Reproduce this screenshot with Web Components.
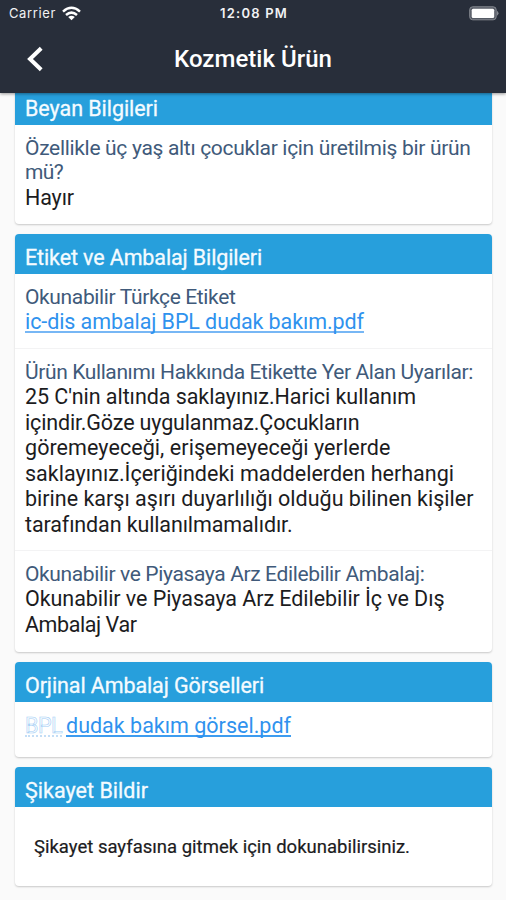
<!DOCTYPE html>
<html lang="tr">
<head>
<meta charset="utf-8">
<title>Kozmetik Ürün</title>
<style>
html, body {
    margin: 0;
    height: 900px;
    overflow: hidden;
    background: #fafafa;
    font-family: Roboto, "Liberation Sans", sans-serif;
}
</style>
</head>
<body>
<app-screen>
    <status-bar slot="top"></status-bar>
    <nav-bar slot="top"><text-line width="158">Kozmetik Ürün</text-line></nav-bar>

    <info-card style="--body-height: 99px">
        <text-line slot="title" width="133">Beyan Bilgileri</text-line>
        <info-row>
            <text-line slot="label" width="445.5">Özellikle üç yaş altı çocuklar için üretilmiş bir ürün</text-line>
            <text-line slot="label" width="38">mü?</text-line>
            <text-line width="49">Hayır</text-line>
        </info-row>
    </info-card>

    <info-card style="--body-height: 378px">
        <text-line slot="title" width="237">Etiket ve Ambalaj Bilgileri</text-line>
        <info-row style="height: 75px">
            <text-line slot="label" width="210.5">Okunabilir Türkçe Etiket</text-line>
            <text-line class="link" width="339">ic-dis ambalaj BPL dudak bakım.pdf</text-line>
        </info-row>
        <info-row style="height: 202px">
            <text-line slot="label" width="448">Ürün Kullanımı Hakkında Etikette Yer Alan Uyarılar:</text-line>
            <text-line width="391">25 C'nin altında saklayınız.Harici kullanım</text-line>
            <text-line width="334.5">içindir.Göze uygulanmaz.Çocukların</text-line>
            <text-line width="365.5">göremeyeceği, erişemeyeceği yerlerde</text-line>
            <text-line width="429">saklayınız.İçeriğindeki maddelerden herhangi</text-line>
            <text-line width="448.5">birine karşı aşırı duyarlılığı olduğu bilinen kişiler</text-line>
            <text-line width="267.5">tarafından kullanılmamalıdır.</text-line>
        </info-row>
        <info-row>
            <text-line slot="label" width="399.5">Okunabilir ve Piyasaya Arz Edilebilir Ambalaj:</text-line>
            <text-line width="419.5">Okunabilir ve Piyasaya Arz Edilebilir İç ve Dış</text-line>
            <text-line width="111.5">Ambalaj Var</text-line>
        </info-row>
    </info-card>

    <info-card style="--body-height: 55px">
        <text-line slot="title" width="239">Orjinal Ambalaj Görselleri</text-line>
        <info-row style="--row-top: 14.5px">
            <file-link><text-line slot="faded" width="37">BPL</text-line><text-line width="225">dudak bakım görsel.pdf</text-line></file-link>
        </info-row>
    </info-card>

    <info-card style="--body-height: 79px">
        <text-line slot="title" width="123">Şikayet Bildir</text-line>
        <card-note><text-line width="376">Şikayet sayfasına gitmek için dokunabilirsiniz.</text-line></card-note>
    </info-card>
</app-screen>

<script>
class BaseElement extends HTMLElement {
    constructor() {
        super()
        this.attachShadow({mode: 'open'})
        this.shadowRoot.innerHTML = this.render()
    }
}

// One line of text, tracked out or in to the given width
class TextLine extends BaseElement {
    render() {
        return `
        <style>
        :host { display: block; white-space: nowrap; }
        span { display: inline-block; }
        :host(.link) span {
            color: #2f92ee;
            text-decoration: underline;
            text-decoration-color: #77b7f5;
            text-decoration-thickness: 2px;
            text-underline-offset: 2px;
            text-decoration-skip-ink: none;
        }
        </style>
        <span><slot></slot></span>`
    }

    connectedCallback() {
        let span = this.shadowRoot.querySelector('span')
        let natural = span.getBoundingClientRect().width
        let gap = (Number(this.getAttribute('width')) - natural) / this.textContent.length
        span.style.letterSpacing = gap.toFixed(3) + 'px'
    }
}

class AppScreen extends BaseElement {
    render() {
        return `
        <style>
        :host { display: flex; flex-direction: column; width: 506px; height: 900px; }
        header {
            flex: none;
            height: 93px;
            background: #282e3a;
            color: #fff;
            box-shadow: 0 1px 3px rgba(0, 0, 0, .4);
            z-index: 1;
        }
        main {
            flex: 1;
            min-height: 0;
            overflow: hidden;
            display: flex;
            flex-direction: column;
            gap: 10px;
            padding: 0 14px 0 15px;
        }
        /* scrolled a little, so the first card starts under the header */
        main::before { content: ''; flex: none; margin-top: -18px; }
        </style>
        <header><slot name="top"></slot></header>
        <main><slot></slot></main>`
    }
}

class StatusBar extends BaseElement {
    render() {
        return `
        <style>
        :host {
            display: grid;
            grid-template-columns: 1fr auto 1fr;
            align-items: center;
            height: 26px;
            padding: 0 7px 0 9px;
            color: #f1f2f4;
            font-family: Inter, Roboto, sans-serif;
            font-size: 13px;
        }
        .left { display: flex; align-items: center; gap: 6px; }
        .time { font-weight: 600; }
        .battery { justify-self: end; }
        svg { display: block; }
        </style>
        <div class="left">
            <text-line width="47">Carrier</text-line>
            <svg width="19" height="15" viewBox="0 0 19 15" fill="none" stroke="#fff" stroke-width="2.5">
                <path d="M1 5.6Q9.5-2 18 5.6M4 9Q9.5 4.2 15 9"/>
                <path d="M9.5 14.2L6.2 10.9Q9.5 8.4 12.8 10.9Z" fill="#fff" stroke="none"/>
            </svg>
        </div>
        <text-line class="time" width="68">12:08 PM</text-line>
        <svg class="battery" width="30" height="15" viewBox="0 0 30 15">
            <rect x=".7" y=".8" width="26.5" height="13" rx="3" fill="#565b65" stroke="#858991"/>
            <rect x="2.7" y="2.8" width="22.5" height="9.2" rx="1.5" fill="#fff"/>
            <path d="M28 4.8Q31 7.3 28 9.8Z" fill="#858991"/>
        </svg>`
    }
}

class NavBar extends BaseElement {
    render() {
        return `
        <style>
        :host {
            display: grid;
            grid-template-columns: 1fr auto 1fr;
            align-items: center;
            height: 66px;
            font-size: 24px;
            font-weight: 500;
        }
        svg { display: block; margin-left: 25px; }
        </style>
        <svg width="20" height="26" viewBox="0 0 20 26" fill="none" stroke="#fff" stroke-width="4">
            <path d="M16.2 2.2L5 13L16.2 23.8"/>
        </svg>
        <slot></slot>`
    }
}

class InfoCard extends BaseElement {
    render() {
        return `
        <style>
        :host {
            display: block;
            flex: none;
            border-radius: 4px;
            background: #fff;
            box-shadow: 0 1px 2px rgba(0, 0, 0, .2);
            overflow: hidden;
        }
        h2 {
            margin: 0;
            box-sizing: border-box;
            height: 40px;
            padding: 6px 10px 0;
            background: #279fdc;
            color: #f4fbff;
            font-size: 21.5px;
            font-weight: 400;
            line-height: 35px;
            -webkit-text-stroke: .3px #f4fbff;
        }
        .body {
            display: flex;
            flex-direction: column;
            height: var(--body-height);
        }
        </style>
        <h2><slot name="title"></slot></h2>
        <div class="body"><slot></slot></div>`
    }
}

class InfoRow extends BaseElement {
    render() {
        return `
        <style>
        :host {
            display: block;
            box-sizing: border-box;
            flex: none;
            padding: var(--row-top, 10.5px) 10px 0;
            border-bottom: 1px solid #f3f3f4;
            font-size: 21.5px;
            line-height: 25.6px;
            color: #1c1c1e;
        }
        :host(:last-of-type) { border-bottom: 0; }
        .label { color: #405a7a; font-size: 21px; line-height: 24.5px; }
        </style>
        <div class="label"><slot name="label"></slot></div>
        <slot></slot>`
    }
}

class FileLink extends BaseElement {
    render() {
        return `
        <style>
        :host { display: flex; gap: 4px; color: #2f92ee; }
        div { border-bottom: 2px solid #3d9cf0; line-height: 18.5px; }
        .faded {
            color: #fbfdff;
            -webkit-text-stroke: .6px #a5cff5;
            border-bottom: 2px dotted #c4def6;
        }
        </style>
        <div class="faded"><slot name="faded"></slot></div>
        <div><slot></slot></div>`
    }
}

class CardNote extends BaseElement {
    render() {
        return `
        <style>
        :host {
            display: flex;
            align-items: center;
            height: 100%;
            padding-left: 19px;
            color: #1c1c1e;
            font-size: 18.5px;
            -webkit-text-stroke: .2px #1c1c1e;
        }
        </style>
        <slot></slot>`
    }
}

window.customElements.define('app-screen', AppScreen)
window.customElements.define('status-bar', StatusBar)
window.customElements.define('nav-bar', NavBar)
window.customElements.define('info-card', InfoCard)
window.customElements.define('info-row', InfoRow)
window.customElements.define('file-link', FileLink)
window.customElements.define('card-note', CardNote)
window.customElements.define('text-line', TextLine)
</script>
</body>
</html>
